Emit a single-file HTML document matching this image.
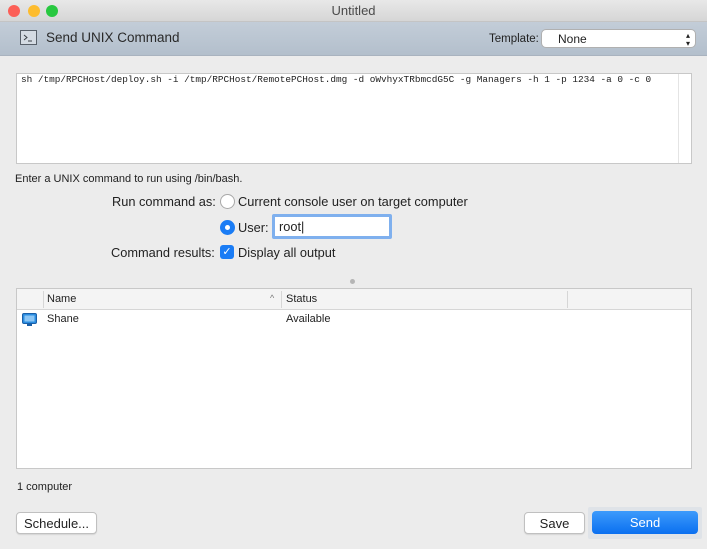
<!DOCTYPE html>
<html><head><meta charset="utf-8"><style>
*{box-sizing:border-box;margin:0;padding:0}
body{width:707px;height:549px;overflow:hidden;background:#ececec;font-family:"Liberation Sans",sans-serif;font-size:12.8px;color:#222;position:relative}
.abs{position:absolute}
.title{left:0;top:0;width:707px;height:22px;background:linear-gradient(#e8e8e8,#d6d6d6);border-bottom:1px solid #c4c4c4;text-align:center;line-height:22px;color:#4a4a4a;font-size:13px}
.dot{top:5px;width:12px;height:12px;border-radius:50%}
.tb{left:0;top:22px;width:707px;height:34px;background:linear-gradient(#c3cdd8,#b3bfcc);border-bottom:1px solid #a9b3bf}
.box{background:#fff;border:1px solid #c8c8c8}
.btn{background:#fff;border:1px solid #c0c0c0;border-radius:4px;text-align:center;line-height:21px;font-size:13px;box-shadow:0 1px 1px rgba(0,0,0,.1)}
</style></head><body>
<div class="abs title">Untitled</div>
<div class="abs dot" style="left:8px;background:#fc5f57"></div>
<div class="abs dot" style="left:28px;background:#fdbc2e"></div>
<div class="abs dot" style="left:46px;background:#28c840"></div>
<div class="abs tb"></div>
<svg class="abs" style="left:20px;top:30px" width="17" height="15"><rect x="0.5" y="0.5" width="16" height="14" fill="#d4dbe3" stroke="#58606a"/><path d="M4 5l3 2.5-3 2.5M8 11h4" stroke="#3a3f45" fill="none"/></svg>
<div class="abs" style="left:46px;top:30px;font-size:13.5px;color:#2a2a2a">Send UNIX Command</div>
<div class="abs" style="left:489px;top:33px;font-size:11.5px">Template:</div>
<div class="abs" style="left:541px;top:29px;width:155px;height:19px;background:#fff;border:1px solid #b0b0b0;border-radius:5px;font-size:12px;line-height:18px;padding-left:16px">None<span style="position:absolute;right:5px;top:2px;font-size:8px;line-height:8px">▴<br>▾</span></div>
<div class="abs box" style="left:16px;top:73px;width:676px;height:91px"><div style="position:absolute;right:0;top:0;width:13px;height:89px;border-left:1px solid #e4e4e4"></div></div>
<div class="abs" style="left:21px;top:74px;font-family:'Liberation Mono',monospace;font-size:9.4px;color:#222;white-space:nowrap">sh /tmp/RPCHost/deploy.sh -i /tmp/RPCHost/RemotePCHost.dmg -d oWvhyxTRbmcdG5C -g Managers -h 1 -p 1234 -a 0 -c 0</div>
<div class="abs" style="left:15px;top:173px;font-size:11px">Enter a UNIX command to run using /bin/bash.</div>
<div class="abs" style="left:112px;top:194px">Run command as:</div>
<div class="abs" style="left:220px;top:194px;width:15px;height:15px;border-radius:50%;background:#fff;border:1px solid #a8a8a8"></div>
<div class="abs" style="left:238px;top:194px">Current console user on target computer</div>
<div class="abs" style="left:220px;top:220px;width:15px;height:15px;border-radius:50%;background:#1a7cf5"><div style="position:absolute;left:5px;top:5px;width:5px;height:5px;border-radius:50%;background:#fff"></div></div>
<div class="abs" style="left:238px;top:220px">User:</div>
<div class="abs" style="left:272px;top:214px;width:120px;height:25px;background:#fff;border:3px solid #7fb0ee;border-radius:2px;padding-left:4px;line-height:19px">root|</div>
<div class="abs" style="left:111px;top:245px">Command results:</div>
<div class="abs" style="left:220px;top:245px;width:14px;height:14px;border-radius:3px;background:#1a7cf5;color:#fff;font-size:11px;line-height:14px;text-align:center">✓</div>
<div class="abs" style="left:238px;top:245px">Display all output</div>
<div class="abs" style="left:350px;top:279px;width:5px;height:5px;border-radius:50%;background:#b5b5b5"></div>
<div class="abs box" style="left:16px;top:288px;width:676px;height:181px"></div>
<div class="abs" style="left:17px;top:289px;width:674px;height:21px;background:#f4f4f4;border-bottom:1px solid #d6d6d6"></div>
<div class="abs" style="left:43px;top:291px;width:1px;height:17px;background:#d6d6d6"></div>
<div class="abs" style="left:281px;top:291px;width:1px;height:17px;background:#d6d6d6"></div>
<div class="abs" style="left:567px;top:291px;width:1px;height:17px;background:#d6d6d6"></div>
<div class="abs" style="left:47px;top:293px;font-size:11px">Name</div>
<div class="abs" style="left:270px;top:293px;font-size:9px;color:#777">^</div>
<div class="abs" style="left:286px;top:293px;font-size:11px">Status</div>
<svg class="abs" style="left:22px;top:313px" width="15" height="13"><rect x="0.5" y="0.5" width="14" height="10" rx="1.5" fill="#2b8de0" stroke="#1a5fa8"/><rect x="2.5" y="2.5" width="10" height="6" fill="#8cc6f5"/><rect x="5" y="11" width="5" height="2" fill="#1a5fa8"/></svg>
<div class="abs" style="left:47px;top:313px;font-size:11px">Shane</div>
<div class="abs" style="left:286px;top:313px;font-size:11px">Available</div>
<div class="abs" style="left:17px;top:481px;font-size:11px">1 computer</div>
<div class="abs btn" style="left:16px;top:512px;width:81px;height:22px">Schedule...</div>
<div class="abs btn" style="left:524px;top:512px;width:61px;height:22px">Save</div>
<div class="abs" style="left:588px;top:507px;width:114px;height:32px;background:#dfe3e8;border-radius:2px"></div>
<div class="abs" style="left:592px;top:511px;width:106px;height:23px;border-radius:4px;background:linear-gradient(#3d9bfb,#0a6ff0);color:#fff;text-align:center;line-height:23px;font-size:13px">Send</div>
</body></html>
